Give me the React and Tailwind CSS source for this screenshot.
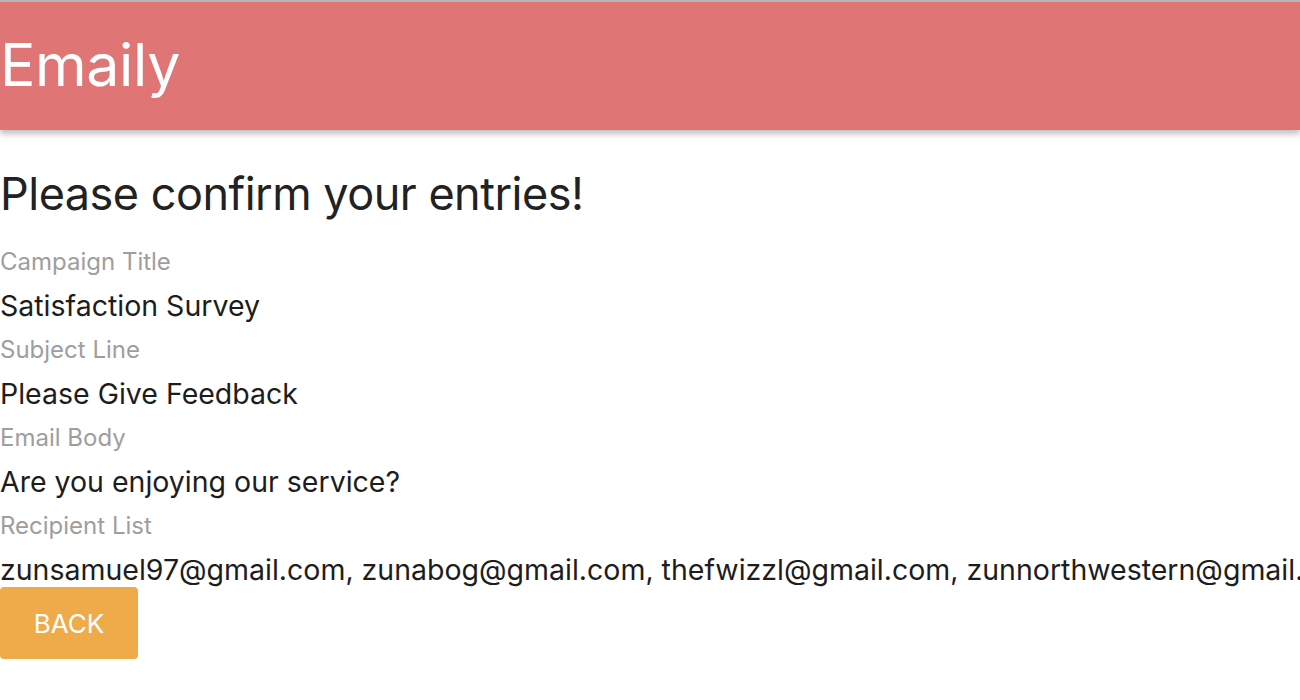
import React from "react";

const fields = [
  ["Campaign Title", "Satisfaction Survey"],
  ["Subject Line", "Please Give Feedback"],
  ["Email Body", "Are you enjoying our service?"],
  [
    "Recipient List",
    "zunsamuel97@gmail.com, zunabog@gmail.com, thefwizzl@gmail.com, zunnorthwestern@gmail.com",
  ],
];

export default function App() {
  return (
    <div
      className="w-[1300px] h-[700px] overflow-hidden bg-white"
      style={{ fontFamily: "Inter, 'Noto Sans', sans-serif" }}
    >
      <div className="h-[2px] bg-[#b9b9b9]" />
      <nav className="h-[128px] bg-[#df7575] shadow-[0_4px_6px_rgba(0,0,0,0.25)] flex items-center relative z-10">
        <span className="text-white text-[59px] leading-none tracking-[-0.4px] pb-[4px]">Emaily</span>
      </nav>
      <div className="pt-[36px]">
        <h5 className="text-[#222] text-[45px] leading-[56px] tracking-[-0.5px] mb-[18px]">
          Please confirm your entries!
        </h5>
        {fields.map(([label, value]) => (
          <div key={label}>
            <div className="text-[#9e9e9e] text-[24px] leading-[44px] whitespace-nowrap">{label}</div>
            <div className="text-[#1d1d1d] text-[28.5px] leading-[44px] whitespace-nowrap">{value}</div>
          </div>
        ))}
        <button className="-mt-[5px] h-[72px] w-[138px] rounded-[4px] bg-[#efab4a] text-white text-[26px] uppercase flex items-center justify-center">
          Back
        </button>
      </div>
    </div>
  );
}
